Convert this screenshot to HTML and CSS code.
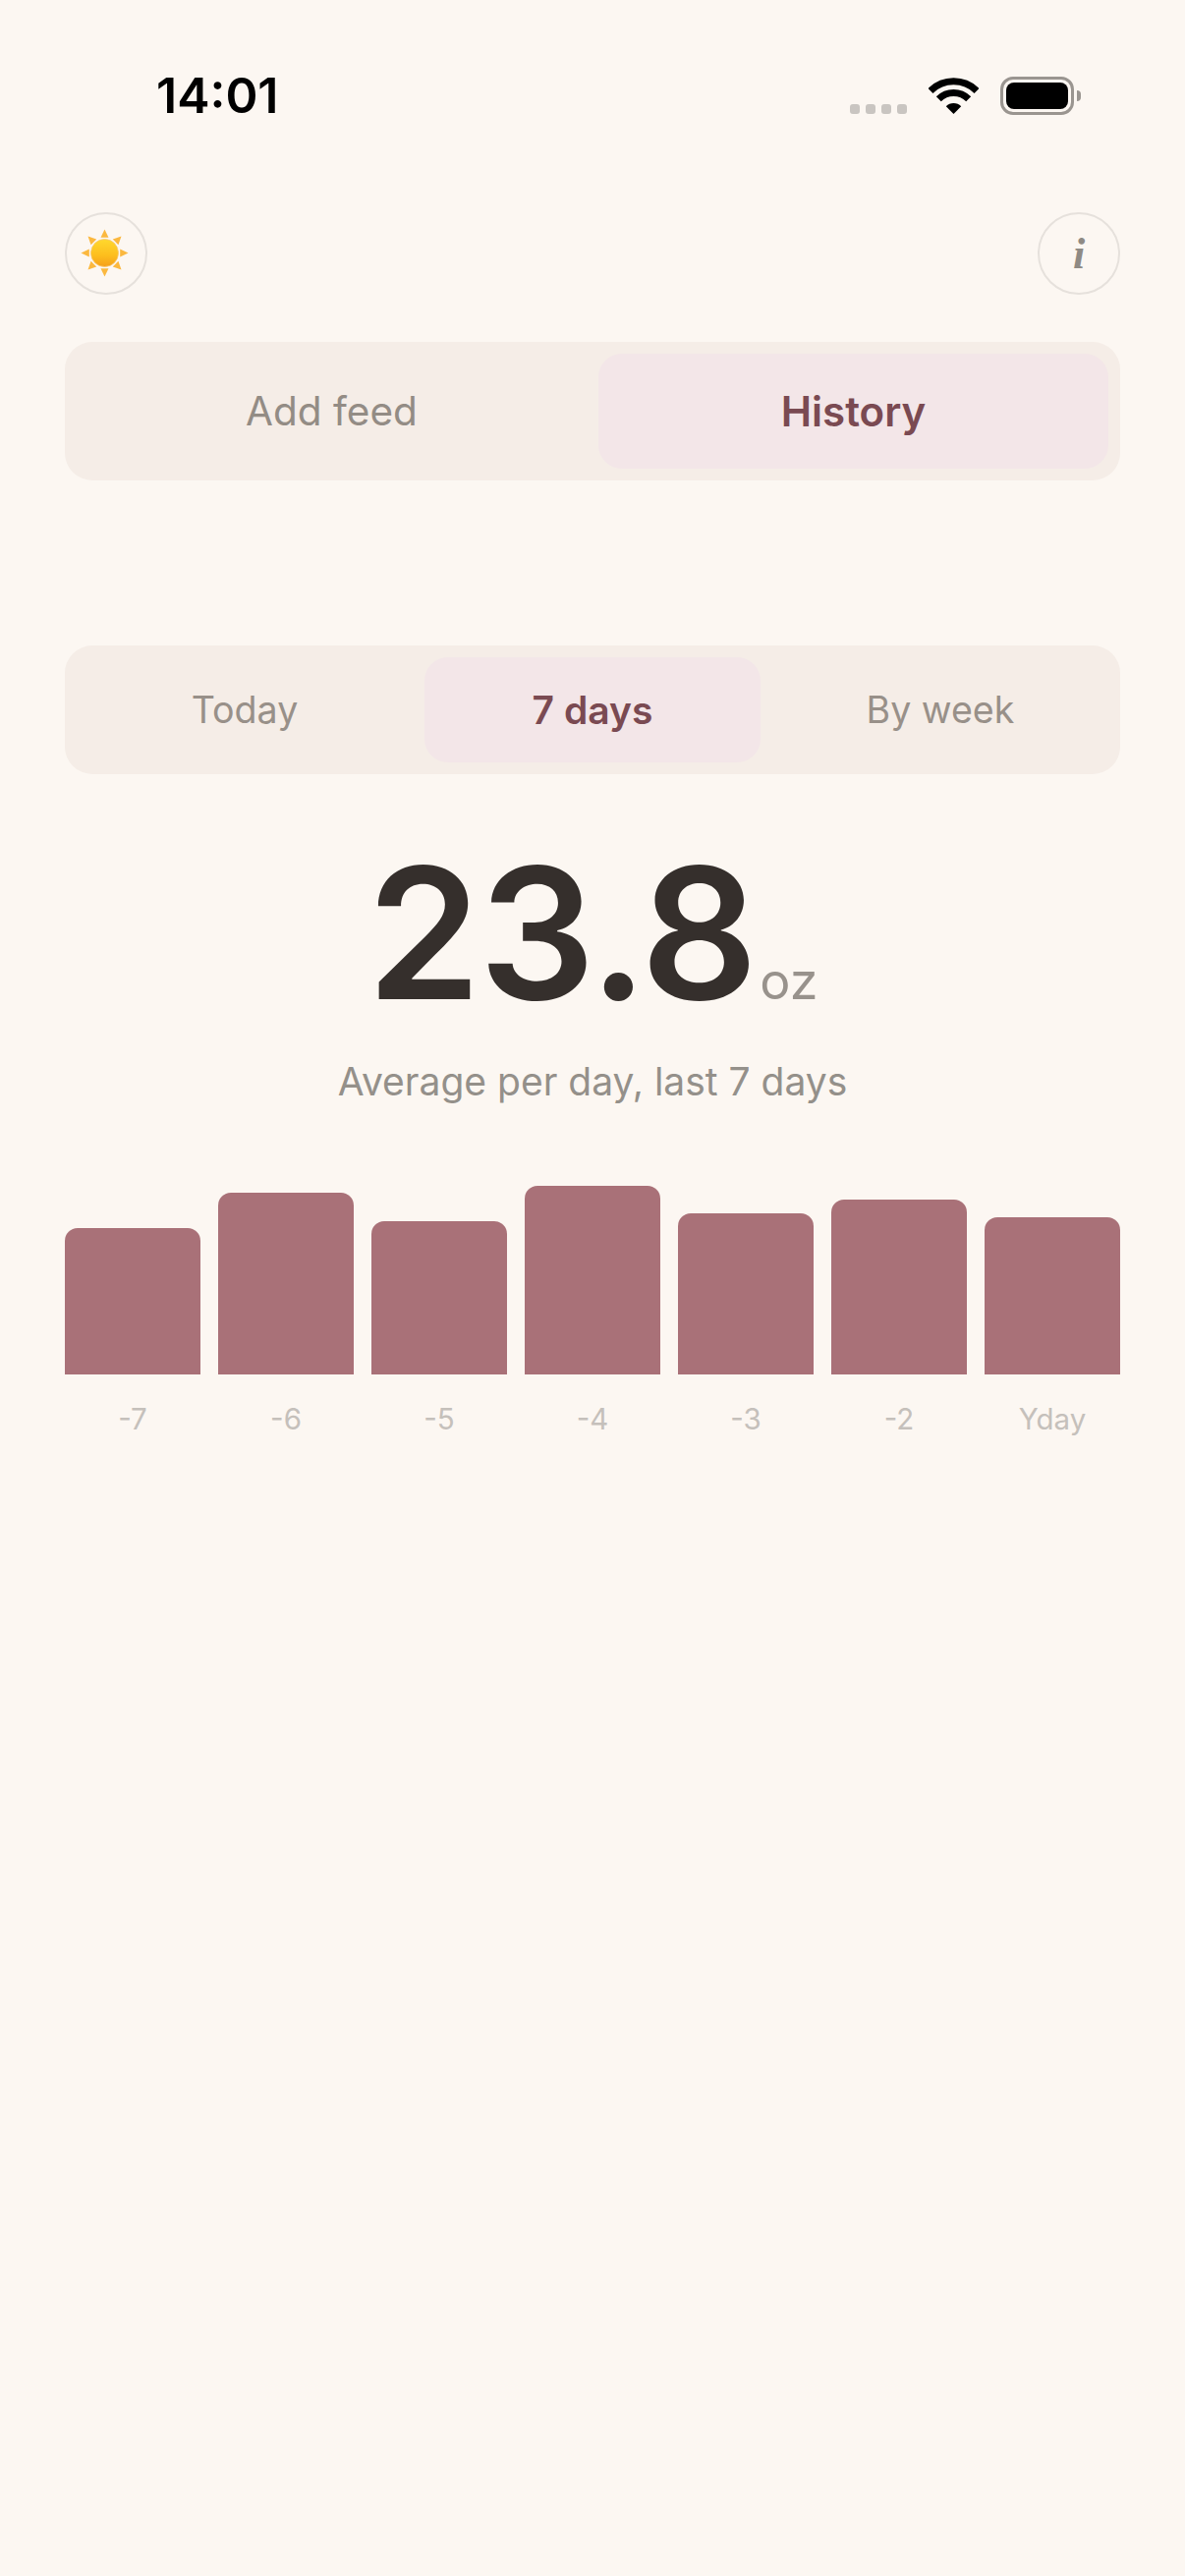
FILE: index.html
```html
<!DOCTYPE html>
<html lang="en">
<head>
    <meta charset="UTF-8">
    <meta name="viewport" content="width=device-width, initial-scale=1.0">
    <title>Feed History</title>
    <link rel="stylesheet" href="styles.css">
</head>
<body>
    <div class="status-bar">
        <span class="time">14:01</span>
        <div class="status-icons">
            <div class="signal"><i></i><i></i><i></i><i></i></div>
            <svg class="wifi" width="51" height="37" viewBox="0 0 51 37">
                <path d="M2 13.5A33.5 33.5 0 0 1 49 13.5" fill="none" stroke="#000" stroke-width="7"/>
                <path d="M10.3 21.8A21.5 21.5 0 0 1 40.7 21.8" fill="none" stroke="#000" stroke-width="7"/>
                <path d="M25.5 37L17.8 29.2A11 11 0 0 1 33.2 29.2Z" fill="#000"/>
            </svg>
            <div class="battery"><div class="battery-fill"></div></div>
        </div>
    </div>

    <main class="app">
        <div class="top-row">
            <button class="round-btn" aria-label="Theme">
                <svg class="sun" width="52" height="52" viewBox="0 0 52 52">
                    <defs>
                        <linearGradient id="sun-fill" x1="0" y1="0" x2="0" y2="1">
                            <stop offset="0" stop-color="#ffd92e"/>
                            <stop offset="0.6" stop-color="#fdbd1d"/>
                            <stop offset="1" stop-color="#f59f1a"/>
                        </linearGradient>
                    </defs>
                    <g fill="#fbb83f">
                        <path d="M24.5 1.5L28.5 9.8H20.5Z"/>
                        <path d="M24.5 1.5L28.5 9.8H20.5Z" transform="rotate(45 24.5 25.5)"/>
                        <path d="M24.5 1.5L28.5 9.8H20.5Z" transform="rotate(90 24.5 25.5)"/>
                        <path d="M24.5 1.5L28.5 9.8H20.5Z" transform="rotate(135 24.5 25.5)"/>
                        <path d="M24.5 1.5L28.5 9.8H20.5Z" transform="rotate(180 24.5 25.5)"/>
                        <path d="M24.5 1.5L28.5 9.8H20.5Z" transform="rotate(225 24.5 25.5)"/>
                        <path d="M24.5 1.5L28.5 9.8H20.5Z" transform="rotate(270 24.5 25.5)"/>
                        <path d="M24.5 1.5L28.5 9.8H20.5Z" transform="rotate(315 24.5 25.5)"/>
                    </g>
                    <circle cx="24.5" cy="25.5" r="14" fill="url(#sun-fill)" stroke="#f8c76a" stroke-width="0.8"/>
                </svg>
            </button>
            <button class="round-btn info-btn" aria-label="Info">i</button>
        </div>

        <div class="tabs tabs-main">
            <div class="tab">Add feed</div>
            <div class="tab active">History</div>
        </div>

        <div class="tabs tabs-range">
            <div class="tab">Today</div>
            <div class="tab active">7 days</div>
            <div class="tab">By week</div>
        </div>

        <div class="stat">
            <span class="stat-value">23.8</span>
            <span class="stat-unit">oz</span>
        </div>
        <p class="stat-label">Average per day, last 7 days</p>

        <div class="chart">
            <div class="bar" style="height: 149px"></div>
            <div class="bar" style="height: 185px"></div>
            <div class="bar" style="height: 156px"></div>
            <div class="bar" style="height: 192px"></div>
            <div class="bar" style="height: 164px"></div>
            <div class="bar" style="height: 178px"></div>
            <div class="bar" style="height: 160px"></div>
        </div>
        <div class="chart-labels">
            <span>-7</span>
            <span>-6</span>
            <span>-5</span>
            <span>-4</span>
            <span>-3</span>
            <span>-2</span>
            <span>Yday</span>
        </div>
    </main>
</body>
</html>
```

FILE: styles.css
```css
body {
    margin: 0;
    min-height: 100vh;
    background-color: #fcf7f2;
    font-family: Inter, "Noto Sans", sans-serif;
    color: #8f8a84;
}

/* Status bar */
.status-bar {
    display: flex;
    justify-content: space-between;
    align-items: flex-end;
    height: 39px;
    padding: 78px 113px 0 159px;
}

.time {
    font-size: 50px;
    font-weight: 600;
    line-height: 39px;
    color: #000;
}

.status-icons {
    display: flex;
    align-items: flex-end;
    gap: 22px;
}

.signal {
    display: flex;
    gap: 6px;
    padding-bottom: 1px;
}

.signal i {
    width: 10px;
    height: 10px;
    border-radius: 3px;
    background-color: #c9c5c1;
}

.wifi {
    display: block;
    margin-bottom: 1px;
}

.battery {
    position: relative;
    box-sizing: border-box;
    width: 75px;
    height: 39px;
    padding: 3px;
    border: 3px solid #9a9590;
    border-radius: 13px;
}

.battery::after {
    content: "";
    position: absolute;
    right: -10px;
    top: 11px;
    width: 4px;
    height: 11px;
    background-color: #9a9590;
    border-radius: 0 6px 6px 0;
}

.battery-fill {
    height: 100%;
    background-color: #000;
    border-radius: 8px;
}

/* Main */
.app {
    padding: 0 66px;
}

.top-row {
    display: flex;
    justify-content: space-between;
    margin-top: 99px;
}

.round-btn {
    display: flex;
    align-items: center;
    justify-content: center;
    box-sizing: border-box;
    width: 84px;
    height: 84px;
    padding: 0;
    background: none;
    border: 2px solid #e6e1dc;
    border-radius: 50%;
}

.info-btn {
    font-family: "Liberation Serif", serif;
    font-style: italic;
    font-weight: 700;
    font-size: 44px;
    color: #8f8a84;
}

/* Segmented tabs */
.tabs {
    display: grid;
    gap: 12px;
    padding: 12px;
    background-color: #f5ede7;
    border-radius: 28px;
}

.tabs-main {
    grid-template-columns: 1fr 1fr;
    margin-top: 48px;
    height: 141px;
    box-sizing: border-box;
}

.tabs-range {
    grid-template-columns: 1fr 1fr 1fr;
    margin-top: 168px;
    height: 131px;
    box-sizing: border-box;
}

.tab {
    display: flex;
    align-items: center;
    justify-content: center;
    font-size: 40.5px;
    color: #938c85;
    border-radius: 24px;
}

.tabs-range .tab {
    font-size: 37.6px;
    color: #989089;
}

.tab.active {
    background-color: #f3e6e8;
    color: #7a4a52;
    font-weight: 600;
    font-size: 42px;
}

.tabs-range .tab.active {
    color: #7a4a52;
    font-size: 39px;
}

/* Big number */
.stat {
    display: flex;
    justify-content: center;
    align-items: baseline;
    gap: 4px;
    margin-top: 62px;
}

.stat-value {
    font-size: 186px;
    font-weight: 560;
    line-height: 200px;
    letter-spacing: -2px;
    color: #352f2c;
}

.stat-unit {
    font-size: 52px;
    color: #98928c;
}

.stat-label {
    margin: 28px 0 0;
    text-align: center;
    font-size: 39px;
    line-height: 46px;
    color: #94908a;
}

/* Chart */
.chart {
    display: grid;
    grid-template-columns: repeat(7, 1fr);
    gap: 18px;
    align-items: end;
    height: 192px;
    margin-top: 83px;
}

.bar {
    background-color: #a97178;
    border-radius: 13px 13px 0 0;
}

.chart-labels {
    display: grid;
    grid-template-columns: repeat(7, 1fr);
    gap: 18px;
    margin-top: 27px;
    text-align: center;
    font-size: 29.5px;
    line-height: 36px;
    color: #c5c0bb;
}
```
